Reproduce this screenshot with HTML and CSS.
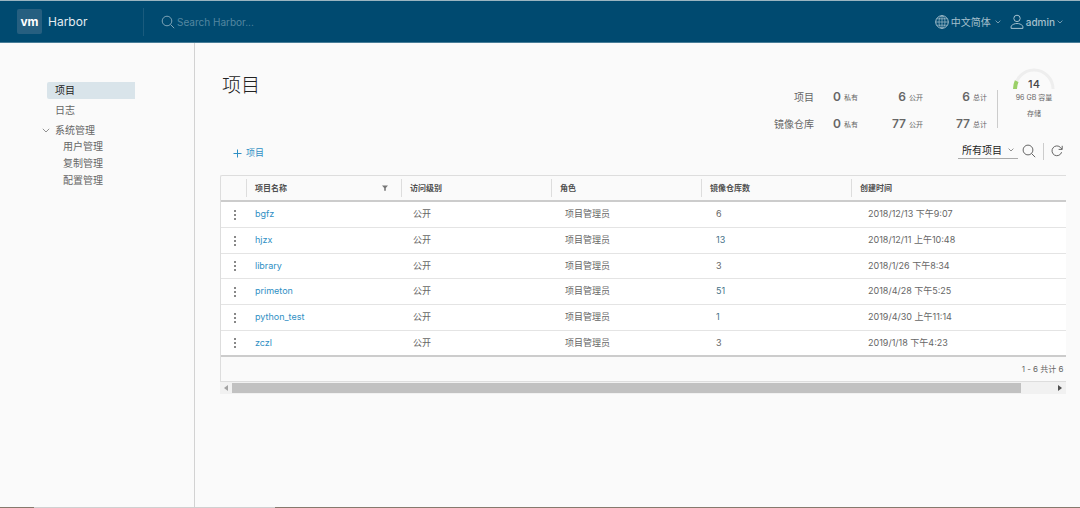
FILE: index.html
```html
<!DOCTYPE html>
<html lang="zh-CN">
<head>
<meta charset="utf-8">
<meta name="viewport" content="width=device-width, initial-scale=1">
<title>Harbor</title>
<link rel="stylesheet" href="styles.css">
</head>
<body>
<header class="topbar">
  <a class="brand" href="#"><span class="logo">vm</span><span class="brand-name">Harbor</span></a>
  <label class="search">
    <svg class="icon-search" viewBox="0 0 14 14" width="14" height="14"><circle cx="6" cy="6" r="4.8"/><path d="M9.5 9.5 13.2 13.2"/></svg>
    <input type="text" class="search-input" placeholder="Search Harbor..." aria-label="Search Harbor">
  </label>
  <nav class="account">
    <button type="button" class="menu-button">
      <svg viewBox="0 0 14 14" width="14" height="14"><circle cx="7" cy="7" r="6.3"/><g stroke-width=".7"><ellipse cx="7" cy="7" rx="3" ry="6.3"/><path d="M7 .7v12.6M.7 7h12.6M1.7 3.8h10.6M1.7 10.2h10.6"/></g></svg>
      <span class="language">中文简体</span>
      <svg class="caret" viewBox="0 0 6 4" width="6" height="4"><path d="m.6.6 2.4 2.4L5.4.6"/></svg>
    </button>
    <button type="button" class="menu-button">
      <svg viewBox="0 0 14 16" width="14" height="16"><circle cx="7" cy="4.4" r="3.2"/><path d="M1.1 14.4v-2.2C2.6 10.300 4.800 9.500 7 9.500s4.400.8 5.900 2.700v2.200z"/></svg>
      <span class="user">admin</span>
      <svg class="caret" viewBox="0 0 6 4" width="6" height="4"><path d="m.6.6 2.4 2.4L5.4.6"/></svg>
    </button>
  </nav>
</header>
<div class="layout">
  <nav class="sidebar">
    <a class="nav-link active" href="#">项目</a>
    <a class="nav-link" href="#">日志</a>
    <button type="button" class="nav-group" aria-expanded="true">
      <svg class="caret" viewBox="0 0 8 5" width="8" height="5"><path d="m.8.8 3.200 3.200L7.200.8"/></svg>
      <span>系统管理</span>
    </button>
    <a class="nav-sub" href="#">用户管理</a>
    <a class="nav-sub" href="#">复制管理</a>
    <a class="nav-sub" href="#">配置管理</a>
  </nav>
  <main class="content">
    <div class="head">
      <h1 class="title">项目</h1>
      <div class="summary">
        <div class="stats">
          <span class="stat-name">项目</span>
          <span class="stat"><b>0</b><span>私有</span></span>
          <span class="stat"><b>6</b><span>公开</span></span>
          <span class="stat"><b>6</b><span>总计</span></span>
          <span class="stat-name">镜像仓库</span>
          <span class="stat"><b>0</b><span>私有</span></span>
          <span class="stat"><b>77</b><span>公开</span></span>
          <span class="stat"><b>77</b><span>总计</span></span>
        </div>
        <div class="storage">
          <svg class="gauge" viewBox="0 0 42 22" width="42" height="22">
            <path class="gauge-track" d="M2 21a19 19 0 0 1 38 0"/>
            <path class="gauge-fill" d="M2 21a19 19 0 0 1 1.700-7.800"/>
            <text class="gauge-value" x="21" y="20">14</text>
          </svg>
          <span class="storage-text">96 GB 容量</span>
          <span class="storage-text">存储</span>
        </div>
      </div>
    </div>
    <div class="toolbar">
      <button type="button" class="add">
        <svg viewBox="0 0 9 9" width="9" height="9"><path d="M4.500.5v8M.5 4.500h8"/></svg>
        项目
      </button>
      <div class="tools">
        <div class="filter">
          <select class="filter-select" aria-label="项目范围"><option>所有项目</option></select>
          <svg class="caret" viewBox="0 0 6 4" width="6" height="4"><path d="m.6.6 2.4 2.4L5.4.6"/></svg>
        </div>
        <button type="button" class="tool" aria-label="搜索"><svg viewBox="0 0 14 14" width="14" height="14"><circle cx="6" cy="6" r="4.900"/><path d="m9.500 9.500 3.700 3.700"/></svg></button>
        <button type="button" class="tool refresh" aria-label="刷新"><svg viewBox="0 0 12 12" width="12" height="12"><path d="M10.600 7.200A4.900 4.900 0 1 1 9.600 2.600L11 4.200M11.200.8v3.600H7.600"/></svg></button>
      </div>
    </div>
    <div class="datagrid">
      <div class="grid-inner">
        <table class="table">
          <colgroup><col class="col-menu"><col class="col-name"><col class="col-mid"><col class="col-mid"><col class="col-mid"><col></colgroup>
          <thead>
            <tr>
              <th aria-label="操作"></th>
              <th><div class="th">项目名称<button type="button" class="col-filter" aria-label="筛选"><svg viewBox="0 0 6 6" width="6" height="6"><path d="M0 .5h6L3.800 3v2.800H2.200V3z"/></svg></button></div></th>
              <th><div class="th">访问级别</div></th>
              <th><div class="th">角色</div></th>
              <th><div class="th">镜像仓库数</div></th>
              <th><div class="th">创建时间</div></th>
            </tr>
          </thead>
          <tbody>
            <tr><td><button type="button" class="row-menu" aria-label="操作"><i></i><i></i><i></i></button></td><td><a href="#">bgfz</a></td><td>公开</td><td>项目管理员</td><td>6</td><td>2018/12/13 下午9:07</td></tr>
            <tr><td><button type="button" class="row-menu" aria-label="操作"><i></i><i></i><i></i></button></td><td><a href="#">hjzx</a></td><td>公开</td><td>项目管理员</td><td>13</td><td>2018/12/11 上午10:48</td></tr>
            <tr><td><button type="button" class="row-menu" aria-label="操作"><i></i><i></i><i></i></button></td><td><a href="#">library</a></td><td>公开</td><td>项目管理员</td><td>3</td><td>2018/1/26 下午8:34</td></tr>
            <tr><td><button type="button" class="row-menu" aria-label="操作"><i></i><i></i><i></i></button></td><td><a href="#">primeton</a></td><td>公开</td><td>项目管理员</td><td>51</td><td>2018/4/28 下午5:25</td></tr>
            <tr><td><button type="button" class="row-menu" aria-label="操作"><i></i><i></i><i></i></button></td><td><a href="#">python_test</a></td><td>公开</td><td>项目管理员</td><td>1</td><td>2019/4/30 上午11:14</td></tr>
            <tr><td><button type="button" class="row-menu" aria-label="操作"><i></i><i></i><i></i></button></td><td><a href="#">zczl</a></td><td>公开</td><td>项目管理员</td><td>3</td><td>2019/1/18 下午4:23</td></tr>
          </tbody>
        </table>
        <div class="pager">1 - 6 共计 6 条记录</div>
      </div>
    </div>
    <div class="scrollbar">
      <svg class="arrow-left" viewBox="0 0 4 6" width="4" height="6"><path d="M4 0v6L0 3z"/></svg>
      <div class="track"><div class="thumb"></div></div>
      <svg class="arrow-right" viewBox="0 0 4 6" width="4" height="6"><path d="M0 0v6l4-3z"/></svg>
    </div>
  </main>
</div>
<footer class="edge"></footer>
</body>
</html>
```

FILE: styles.css
```css
* { box-sizing: border-box; }

body {
  margin: 0;
  min-height: 100vh;
  display: flex;
  flex-direction: column;
  background: #fafafa;
  color: #666;
  font: 9px/18px Inter, "Noto Sans CJK SC", sans-serif;
}

button, input, select {
  margin: 0;
  padding: 0;
  border: 0;
  background: none;
  color: inherit;
  font: inherit;
}

a { color: inherit; text-decoration: none; }

svg { flex: none; fill: none; stroke: currentColor; }
.caret { opacity: .7; }

.topbar {
  display: flex;
  align-items: center;
  height: 43px;
  padding: 0 17px;
  background: #004a70;
  border-top: 1px solid #9ab5c1;
  border-bottom: 1px solid #487d98;
}

.brand {
  display: flex;
  align-items: center;
  gap: 6px;
  width: 127px;
  height: 28px;
  border-right: 1px solid #1a5b7d;
}

.logo {
  width: 25px;
  border-radius: 2px;
  background: #265f80;
  color: #fff;
  font-size: 12px;
  font-weight: 700;
  line-height: 25px;
  text-align: center;
}

.brand-name { color: #e4edf1; font-size: 12px; }

.search {
  flex: 1;
  display: flex;
  align-items: center;
  gap: 2px;
  padding-left: 17px;
  color: #7fa4b7;
}

.search-input { width: 160px; font-size: 10px; }
.search-input::placeholder { color: #5487a0; opacity: 1; }

.account { display: flex; gap: 9px; color: #a5c0cd; }

.menu-button {
  display: flex;
  align-items: center;
  gap: 2px;
  font-size: 10px;
}

.language { padding-right: 2px; }
.user { font-size: 10px; font-weight: 500; }

.layout { flex: 1; display: flex; }

.sidebar {
  flex: none;
  width: 195px;
  padding: 39px 59px 0 47px;
  border-right: 1px solid #d2d2d2;
  font-size: 10px;
}

.nav-link, .nav-sub { display: block; line-height: 17px; }
.nav-link { padding-left: 8px; margin-bottom: 3px; }
.nav-link.active { background: #d9e4ea; color: #222; border-radius: 2px 0 0 2px; }
.nav-sub { padding-left: 16px; }

.nav-group {
  display: flex;
  align-items: center;
  gap: 5px;
  margin-left: -5px;
  line-height: 16px;
}

.content { flex: 1; min-width: 0; padding: 25px 14px 0 25px; }

.head { display: flex; justify-content: space-between; height: 70px; }

.title {
  margin: 0;
  padding-left: 2px;
  color: #222;
  font-size: 19px;
  font-weight: 300;
  line-height: 36px;
}

.summary { display: flex; }

.stats {
  display: grid;
  grid-template-columns: 44px 44px 65px 64px;
  grid-auto-rows: 27px;
  margin-top: 16px;
  padding-right: 10px;
  line-height: 27px;
  text-align: right;
  white-space: nowrap;
}

.stat-name { font-size: 10px; }

.stat {
  display: flex;
  justify-content: flex-end;
  gap: 3px;
  font-size: 7px;
}

.stat b { font-size: 12px; font-weight: 600; line-height: 26px; }

.storage {
  display: flex;
  flex-direction: column;
  align-items: center;
  width: 69px;
  padding-right: 1px;
}

.storage::before {
  content: "";
  align-self: flex-start;
  width: 1px;
  height: 38px;
  margin: 22px 0 -60px;
  background: #ccc;
}

.gauge { margin-left: 6px; }
.gauge-track { stroke: #eee; stroke-width: 3; }
.gauge-fill { stroke: #9bd068; stroke-width: 4; }

.gauge-value {
  fill: #454545;
  stroke: none;
  font-size: 11px;
  font-weight: 500;
  text-anchor: middle;
}

.storage-text { padding-left: 6px; font-size: 7px; line-height: 16px; }

.toolbar {
  display: flex;
  align-items: center;
  justify-content: space-between;
  height: 26px;
  margin-bottom: 11px;
}

.add {
  display: flex;
  align-items: center;
  gap: 4px;
  margin: 4px 0 0 13px;
  color: #2f8fc4;
}

.tools { display: flex; align-items: center; }

.filter {
  display: flex;
  align-items: center;
  width: 60px;
  height: 17px;
  padding: 0 4px;
  margin-bottom: 1px;
  border-bottom: 1px solid #aaa;
}

.filter-select {
  flex: 1;
  min-width: 0;
  appearance: none;
  color: #222;
  font-size: 10px;
  line-height: 16px;
}

.tool { display: flex; align-items: center; height: 17px; padding-left: 4px; }
.refresh { margin-left: 7px; padding: 0 3px 0 7px; border-left: 1px solid #ccc; }

.datagrid {
  overflow: hidden;
  border-top: 1px solid #ddd;
  border-left: 1px solid #ddd;
  border-bottom: 1px solid #ddd;
  border-radius: 2px 0 0 0;
}

.grid-inner { width: 104%; }

.table {
  width: 100%;
  table-layout: fixed;
  border-collapse: separate;
  border-spacing: 0;
  border-bottom: 1px solid #ccc;
}

.col-menu { width: 25px; }
.col-name { width: 155px; }
.col-mid { width: 150px; }

th { height: 26px; padding: 0; border-bottom: 2px solid #ccc; text-align: left; }

.th {
  display: flex;
  align-items: center;
  justify-content: space-between;
  height: 18px;
  padding: 0 13px 0 8px;
  border-left: 1px solid #ddd;
  color: #505050;
  font-size: 8px;
  font-weight: 600;
}

.col-filter { display: flex; color: #777; }
.col-filter svg { fill: currentColor; stroke: none; }

td {
  height: 26px;
  padding: 0 0 1px 12px;
  background: #fff;
  border-bottom: 1px solid #e4e4e4;
  line-height: 18px;
}

tr:nth-child(3n) td { height: 25px; }
tr:last-child td { border-bottom-color: #ccc; }
td:nth-child(2) { padding-left: 9px; color: #2f8fc4; }
td:nth-child(4) { padding-left: 14px; }
td:nth-child(5) { padding-left: 15px; }
td:nth-child(6) { padding-left: 17px; }
tr:nth-child(2) td:nth-child(5),
tr:nth-child(4) td:nth-child(5),
tr:nth-child(5) td:nth-child(5) { color: #467287; }

.row-menu { display: flex; flex-direction: column; gap: 2px; padding: 1px 0 0 1px; }
.row-menu i { width: 2px; height: 2px; background: #888; }

.pager {
  padding-right: 10px;
  font-size: 8px;
  line-height: 24px;
  text-align: right;
}

.scrollbar {
  display: flex;
  align-items: center;
  height: 12px;
  padding: 0 4px;
  background: #f1f1f1;
}

.scrollbar svg { fill: #505050; stroke: none; }
.scrollbar .arrow-left { fill: #a3a3a3; }
.track { flex: 1; margin: 0 4px; }
.thumb { width: 96%; height: 10px; background: #c1c1c1; }

.edge {
  height: 1px;
  background: linear-gradient(90deg, #85796d 34px, #d0d0d0 34px 275px, #85796d 275px);
}
```
